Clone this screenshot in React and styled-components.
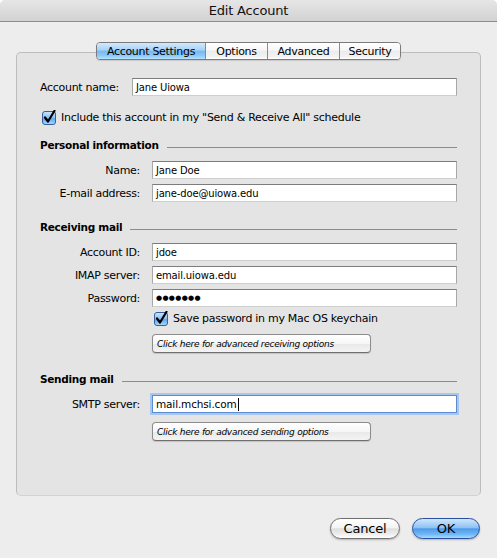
import React from 'react';
import styled, { createGlobalStyle } from 'styled-components';

const GlobalStyle = createGlobalStyle`
  html, body {
    margin: 0;
    padding: 0;
    background: #ffffff;
  }
  body {
    font-family: "DejaVu Sans", "Lucida Grande", sans-serif;
    font-size: 11px;
    color: #000;
  }
`;

const Window = styled.div`
  width: 497px;
  height: 558px;
  background: #ededed;
  border-radius: 5px 5px 0 0;
  overflow: hidden;
  display: flex;
  flex-direction: column;
`;

const TitleBar = styled.div`
  height: 21px;
  border-bottom: 1px solid #8d8d8d;
  background: linear-gradient(#e6e6e6, #d2d2d2);
  display: flex;
  align-items: center;
  justify-content: center;
  font-size: 13px;
  letter-spacing: -0.2px;
  color: #111;
`;

const Body = styled.div`
  padding: 0 16px;
  display: flex;
  flex-direction: column;
`;

const Tabs = styled.div`
  position: relative;
  z-index: 1;
  align-self: center;
  margin-top: 20px;
  display: flex;
  height: 18px;
  box-sizing: border-box;
  border: 1px solid #7b7b7b;
  border-radius: 4px;
  overflow: hidden;
  box-shadow: 0 1px 1px rgba(0, 0, 0, 0.12);
`;

const Tab = styled.div`
  width: ${p => p.$w}px;
  box-sizing: border-box;
  display: flex;
  align-items: center;
  justify-content: center;
  letter-spacing: -0.3px;
  border-left: ${p => (p.$first ? 'none' : '1px solid #8a8a8a')};
  background: ${p =>
    p.$active
      ? 'linear-gradient(#d2e9fc 0%, #a6d2f8 45%, #76b8f2 50%, #8ccaf9 80%, #b6e2ff 100%)'
      : 'linear-gradient(#ffffff 0%, #f7f7f7 45%, #ececec 50%, #f2f2f2 85%, #ffffff 100%)'};
`;

const Panel = styled.div`
  margin-top: -8px;
  height: 444px;
  box-sizing: border-box;
  background: #e4e4e4;
  border: 1px solid #bdbdbd;
  border-bottom-color: #d2d2d2;
  border-radius: 5px;
  padding: 25px 23px 0 23px;
  display: flex;
  flex-direction: column;
`;

const Row = styled.div`
  display: grid;
  grid-template-columns: ${p => p.$label || 100}px 1fr;
  column-gap: 12px;
  align-items: center;
  margin-top: ${p => p.$mt || 0}px;
`;

const Label = styled.div`
  text-align: ${p => p.$align || 'right'};
  letter-spacing: -0.3px;
  white-space: nowrap;
`;

const Field = styled.div`
  height: 18px;
  box-sizing: border-box;
  background: #fff;
  border: 1px solid #a8a8a8;
  border-top-color: #7c7c7c;
  border-bottom-color: #cfcfcf;
  padding: 0 3px;
  display: flex;
  align-items: center;
  font-size: 10px;
  letter-spacing: -0.15px;
  white-space: nowrap;
  ${p =>
    p.$focus &&
    `
    border: 1px solid #5d8bd0;
    box-shadow: 0 0 0 2px #a8c6ee;
    font-size: 10.5px;
  `}
`;

const Caret = styled.span`
  display: inline-block;
  width: 1px;
  height: 13px;
  background: #000;
  margin-left: 1px;
`;

const Dots = styled.span`
  font-size: 7px;
  letter-spacing: 0.3px;
`;

const CheckRow = styled.div`
  display: flex;
  align-items: center;
  gap: 4px;
  height: 14px;
  margin-top: ${p => p.$mt || 0}px;
  margin-left: ${p => p.$indent || 2}px;
  letter-spacing: -0.28px;
  white-space: nowrap;
`;

const Heading = styled.div`
  display: flex;
  align-items: center;
  gap: 8px;
  height: 13px;
  margin-top: ${p => p.$mt || 0}px;
  font-weight: bold;
  font-size: 10.5px;
  letter-spacing: -0.3px;
  white-space: nowrap;
`;

const Rule = styled.div`
  flex: 1;
  height: 1px;
  margin-top: 5px;
  background: #8b8b8b;
`;

const OptionButton = styled.div`
  width: 219px;
  height: 19px;
  box-sizing: border-box;
  margin-top: ${p => p.$mt || 0}px;
  margin-left: 112px;
  padding-left: 4px;
  display: flex;
  align-items: center;
  border: 1px solid #8c8c8c;
  border-bottom-color: #6f6f6f;
  border-radius: 4px;
  background: linear-gradient(#ffffff 0%, #f6f6f6 50%, #e9e9e9 55%, #f4f4f4 100%);
  box-shadow: 0 1px 1px rgba(0, 0, 0, 0.15);
  font-style: italic;
  font-size: 9px;
  letter-spacing: -0.25px;
  white-space: nowrap;
`;

const Footer = styled.div`
  display: flex;
  justify-content: flex-end;
  gap: 12px;
  padding-right: 1px;
  margin-top: 22px;
`;

const PillButton = styled.div`
  width: ${p => p.$w}px;
  height: 21px;
  box-sizing: border-box;
  border-radius: 11px;
  display: flex;
  align-items: center;
  justify-content: center;
  font-size: 13px;
  letter-spacing: -0.2px;
  border: 1px solid ${p => (p.$primary ? '#2a4f9c' : '#6f6f6f')};
  background: ${p =>
    p.$primary
      ? 'linear-gradient(#cfe6fb 0%, #8ec3f5 45%, #4f9bea 52%, #6fb6f6 80%, #a5dcff 100%)'
      : 'linear-gradient(#ffffff 0%, #f4f4f4 45%, #dedede 52%, #eeeeee 80%, #ffffff 100%)'};
  box-shadow: 0 1px 2px rgba(0, 0, 0, 0.25);
`;

function CheckBox() {
  return (
    <svg width="15" height="15" viewBox="0 0 15 15">
      <defs>
        <linearGradient id="cbg" x1="0" y1="0" x2="0" y2="1">
          <stop offset="0" stopColor="#cfe6fb" />
          <stop offset="0.5" stopColor="#87c0f4" />
          <stop offset="0.55" stopColor="#5ea6ee" />
          <stop offset="1" stopColor="#a9dcff" />
        </linearGradient>
      </defs>
      <rect x="0.5" y="1.5" width="13" height="13" rx="2.5" fill="url(#cbg)" stroke="#34609f" />
      <path d="M3 7.5 L6 11.5 L12.5 0.8" fill="none" stroke="#000" strokeWidth="2.2" strokeLinecap="round" strokeLinejoin="round" />
    </svg>
  );
}

export default function App() {
  return (
    <>
      <GlobalStyle />
      <Window>
        <TitleBar>Edit Account</TitleBar>
        <Body>
          <Tabs>
            <Tab $w={108} $first $active>Account Settings</Tab>
            <Tab $w={62}>Options</Tab>
            <Tab $w={72}>Advanced</Tab>
            <Tab $w={61}>Security</Tab>
          </Tabs>
          <Panel>
            <Row $label={80}>
              <Label $align="left">Account name:</Label>
              <Field>Jane Uiowa</Field>
            </Row>
            <CheckRow $mt={14}>
              <CheckBox />
              Include this account in my "Send &amp; Receive All" schedule
            </CheckRow>

            <Heading $mt={14}>
              Personal information
              <Rule />
            </Heading>
            <Row $mt={10}>
              <Label>Name:</Label>
              <Field>Jane Doe</Field>
            </Row>
            <Row $mt={5}>
              <Label>E-mail address:</Label>
              <Field>jane-doe@uiowa.edu</Field>
            </Row>

            <Heading $mt={18}>
              Receiving mail
              <Rule />
            </Heading>
            <Row $mt={10}>
              <Label>Account ID:</Label>
              <Field>jdoe</Field>
            </Row>
            <Row $mt={5}>
              <Label>IMAP server:</Label>
              <Field>email.uiowa.edu</Field>
            </Row>
            <Row $mt={5}>
              <Label>Password:</Label>
              <Field><Dots>●●●●●●●</Dots></Field>
            </Row>
            <CheckRow $mt={4} $indent={114}>
              <CheckBox />
              Save password in my Mac OS keychain
            </CheckRow>
            <OptionButton $mt={9}>Click here for advanced receiving options</OptionButton>

            <Heading $mt={19}>
              Sending mail
              <Rule />
            </Heading>
            <Row $mt={10}>
              <Label>SMTP server:</Label>
              <Field $focus>mail.mchsi.com<Caret /></Field>
            </Row>
            <OptionButton $mt={9}>Click here for advanced sending options</OptionButton>
          </Panel>
          <Footer>
            <PillButton $w={70}>Cancel</PillButton>
            <PillButton $w={68} $primary>OK</PillButton>
          </Footer>
        </Body>
      </Window>
    </>
  );
}
